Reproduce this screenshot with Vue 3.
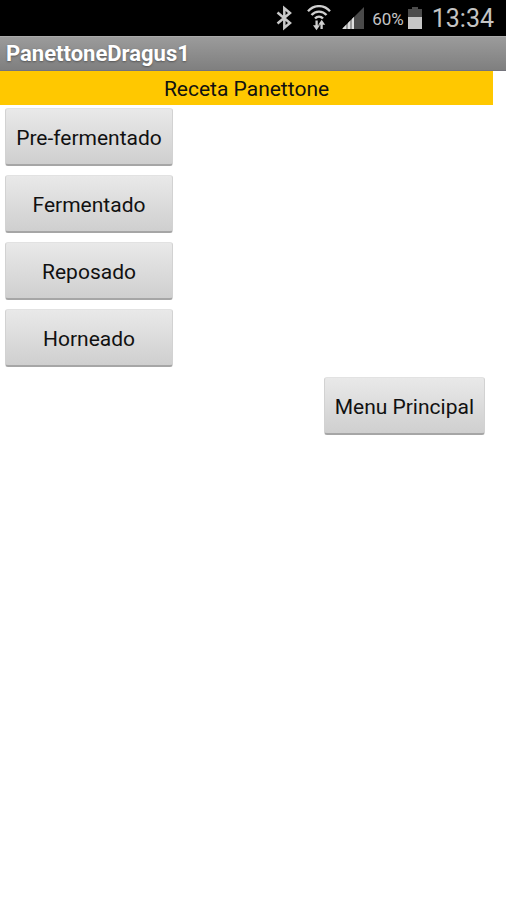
<script setup>
const steps = ['Pre-fermentado', 'Fermentado', 'Reposado', 'Horneado']
</script>

<template>
  <div class="screen">
    <div class="status">
      <svg class="icon" width="16" height="26" viewBox="0 0 16 26" aria-hidden="true">
        <path d="M1.5 7.5L14 18L8.3 22.8V3.2L14 8L1.5 18.5" fill="none" stroke="#c8c8c8" stroke-width="2.5" />
      </svg>
      <svg class="icon wifi" width="24" height="26" viewBox="0 0 24 26" aria-hidden="true">
        <g fill="none" stroke="#cfcfcf" stroke-width="2.3">
          <path d="M1 6.2C7-.6 17-.6 23 6.2" />
          <path d="M4.5 10C8.5 5.4 15.5 5.4 19.5 10" />
          <path d="M8 13.6C10.2 11 13.8 11 16 13.6" />
          <path d="M9.6 15.5V22M14.6 24V18" />
        </g>
        <path d="M6 20.2h7L9.5 25.2zM11.2 19.8h7L14.7 14.8z" fill="#cfcfcf" />
      </svg>
      <svg class="icon signal" width="24" height="26" viewBox="0 0 24 26" aria-hidden="true">
        <path d="M23 2V24H1z" fill="#4a4a4a" />
        <path d="M13 12V24H1z" fill="#999999" />
        <path d="M5 20v4H2v-1zM9 16v8H7v-6zM13 12v12h-2V14z" fill="#dddddd" />
      </svg>
      <span class="percent">60%</span>
      <svg class="icon battery" width="14" height="26" viewBox="0 0 14 26" aria-hidden="true">
        <path d="M4 2h6v2h4v9H0V4h4z" fill="#4c4c4c" />
        <path d="M0 12h14v12H0z" fill="#c6c6c6" />
      </svg>
      <time class="clock">13:34</time>
    </div>
    <header class="title-bar"><h1>PanettoneDragus1</h1></header>
    <main>
      <h2>Receta Panettone</h2>
      <div class="steps">
        <button v-for="step in steps" :key="step" type="button">{{ step }}</button>
      </div>
      <div class="footer">
        <button type="button">Menu Principal</button>
      </div>
    </main>
  </div>
</template>

<style>
body {
  margin: 0;
  background: #fff;
}
</style>

<style scoped>
.screen {
  font-family: Roboto, "Liberation Sans", sans-serif;
  color: #111;
}
.status {
  display: flex;
  align-items: center;
  justify-content: flex-end;
  height: 36px;
  padding-right: 12px;
  background: #000;
  color: #c4c4c4;
}
.icon {
  display: block;
  flex: none;
}
.wifi {
  margin-left: 15px;
}
.signal {
  margin-left: 10px;
}
.percent {
  margin-left: 7px;
  padding-top: 2px;
  font-size: 17px;
  line-height: 24px;
}
.battery {
  margin: 0 10px 0 4px;
}
.clock {
  padding-top: 2px;
  font-size: 25px;
  line-height: 32px;
}
.title-bar {
  box-sizing: border-box;
  height: 35px;
  padding: 0 6px;
  border-top: 1px solid #aaa;
  border-bottom: 1px solid #74747c;
  background: linear-gradient(#9b9b9b, #7f7f7f);
}
h1 {
  margin: 0;
  color: #fff;
  font-size: 22px;
  font-weight: 700;
  line-height: 34px;
  text-shadow: 0 1px 2px #555;
}
main {
  padding-right: 13px;
}
h2 {
  margin: 0;
  padding-top: 2px;
  background: #ffc800;
  font-size: 21px;
  font-weight: 400;
  line-height: 32px;
  text-align: center;
}
.steps {
  display: flex;
  flex-direction: column;
  align-items: flex-start;
  gap: 9px;
  padding: 3px 5px 10px;
}
.footer {
  display: flex;
  justify-content: flex-end;
  padding-right: 8px;
}
button {
  height: 58px;
  padding: 2px 10px 0;
  border: 1px solid #d2d2d2;
  border-top-color: #e2e2e2;
  border-bottom: 2px solid #a6a6a6;
  border-radius: 3px;
  background: linear-gradient(#e9e9e9, #cfcfcf);
  color: #111;
  font-family: inherit;
  font-size: 21px;
  line-height: 26px;
}
.steps button {
  min-width: 168px;
}
</style>
